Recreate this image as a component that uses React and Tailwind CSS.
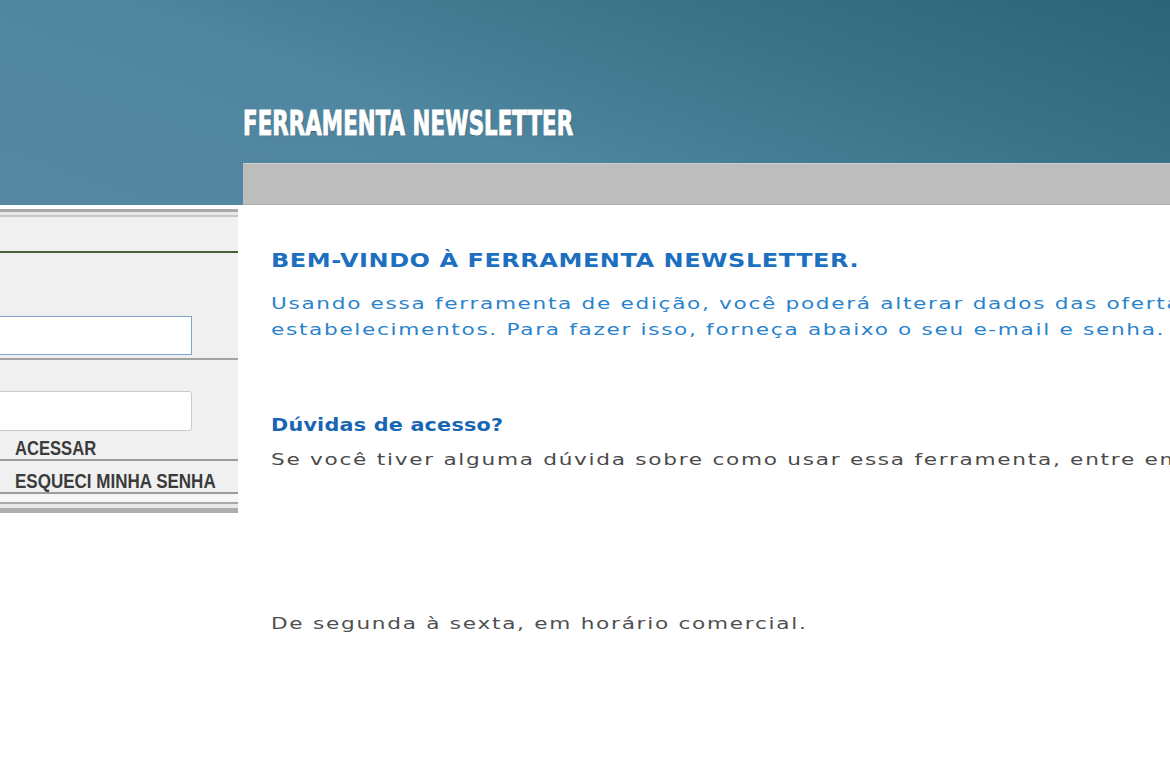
import React from "react";

export default function App() {
  return (
    <div className="w-[1170px] h-[780px] overflow-hidden bg-white font-['DejaVu_Sans',sans-serif]">
      {/* --- Header --- */}
      <header className="h-[205px] flex bg-[linear-gradient(200deg,#2b6476_0%,#3a7287_30%,#4f86a0_62%,#5688a2_100%)]">
        <div className="w-[243px] shrink-0" />
        <div className="flex-1 flex flex-col">
          <div className="h-[163px] flex items-end pb-[25px]">
            <h1 className="inline-block origin-left scale-x-[0.7] whitespace-nowrap text-[34px] leading-[30px] font-bold text-white font-['DejaVu_Sans_Condensed','DejaVu_Sans',sans-serif] [-webkit-text-stroke:1px_white] [text-shadow:1px_1px_1px_rgba(20,50,70,0.6)]">
              FERRAMENTA NEWSLETTER
            </h1>
          </div>
          <div className="h-[42px] bg-[#bdbdbd] border-t border-t-[#cfcfcf] border-b border-b-[#adadad]" />
        </div>
      </header>

      <div className="flex">
        {/* --- Login sidebar --- */}
        <aside className="w-[238px] shrink-0 pt-[4px]">
          <div className="h-[3px] bg-[#a9a9a9]" />
          <div className="h-[3px] bg-[#e9e9e9]" />
          <div className="h-[2px] bg-[#c6c6c6]" />
          <div className="bg-[#f0f0f0] pt-[34px]">
            <div className="h-[2px] bg-[#4c5e35]" />
            <div className="pt-[63px]">
              <input
                type="text"
                className="block ml-[-10px] w-[202px] h-[39px] bg-white border border-[#7fa4cf] outline-none"
              />
            </div>
            <div className="h-[2px] bg-[#a3a3a3] mt-[3px]" />
            <div className="pt-[31px]">
              <input
                type="password"
                className="block ml-[-10px] w-[202px] h-[40px] bg-white border border-[#cacaca] rounded-[3px] outline-none"
              />
            </div>
            <div className="pl-[15px] h-[28px] flex items-end">
              <span className="inline-block origin-left scale-x-[0.79] text-[21px] leading-[22px] font-bold text-[#3b3b3b] font-['Liberation_Sans',sans-serif]">
                ACESSAR
              </span>
            </div>
            <div className="h-[2px] bg-[#9c9c9c]" />
            <div className="pl-[15px] h-[31px] flex items-end">
              <span className="inline-block origin-left scale-x-[0.81] whitespace-nowrap text-[21px] leading-[22px] font-bold text-[#3b3b3b] font-['Liberation_Sans',sans-serif]">
                ESQUECI MINHA SENHA
              </span>
            </div>
            <div className="h-[2px] bg-[#9c9c9c]" />
          </div>
          <div className="h-[8px] bg-[#f6f6f6]" />
          <div className="h-[2px] bg-[#a8a8a8]" />
          <div className="h-[4px] bg-[#e8e8e8]" />
          <div className="h-[5px] bg-[#adadad]" />
        </aside>

        {/* --- Main content --- */}
        <main className="flex-1 pl-[33px] pt-[43px] whitespace-nowrap">
          <h2 className="text-[20px] leading-[24px] font-bold text-[#1d6fbf]">
            <span className="inline-block origin-left scale-x-[1.2] tracking-[0.45px]">
              BEM-VINDO À FERRAMENTA NEWSLETTER.
            </span>
          </h2>
          <p className="mt-[19px] text-[16px] leading-[26px] text-[#2a83cc]">
            <span className="inline-block origin-left scale-x-[1.35] tracking-[1.25px]">
              Usando essa ferramenta de edição, você poderá alterar dados das ofertas
              <br />
              estabelecimentos. Para fazer isso, forneça abaixo o seu e-mail e senha.
            </span>
          </p>
          <h3 className="mt-[71px] text-[18px] leading-[22px] font-bold text-[#1766b3]">
            <span className="inline-block origin-left scale-x-[1.15] tracking-[0.2px]">
              Dúvidas de acesso?
            </span>
          </h3>
          <p className="mt-[11px] text-[16px] leading-[26px] text-[#4a4a4a]">
            <span className="inline-block origin-left scale-x-[1.35] tracking-[1.28px]">
              Se você tiver alguma dúvida sobre como usar essa ferramenta, entre em
            </span>
          </p>
          <p className="mt-[138px] text-[16px] leading-[26px] text-[#4f4f4f]">
            <span className="inline-block origin-left scale-x-[1.35] tracking-[1.28px]">
              De segunda à sexta, em horário comercial.
            </span>
          </p>
        </main>
      </div>
    </div>
  );
}
